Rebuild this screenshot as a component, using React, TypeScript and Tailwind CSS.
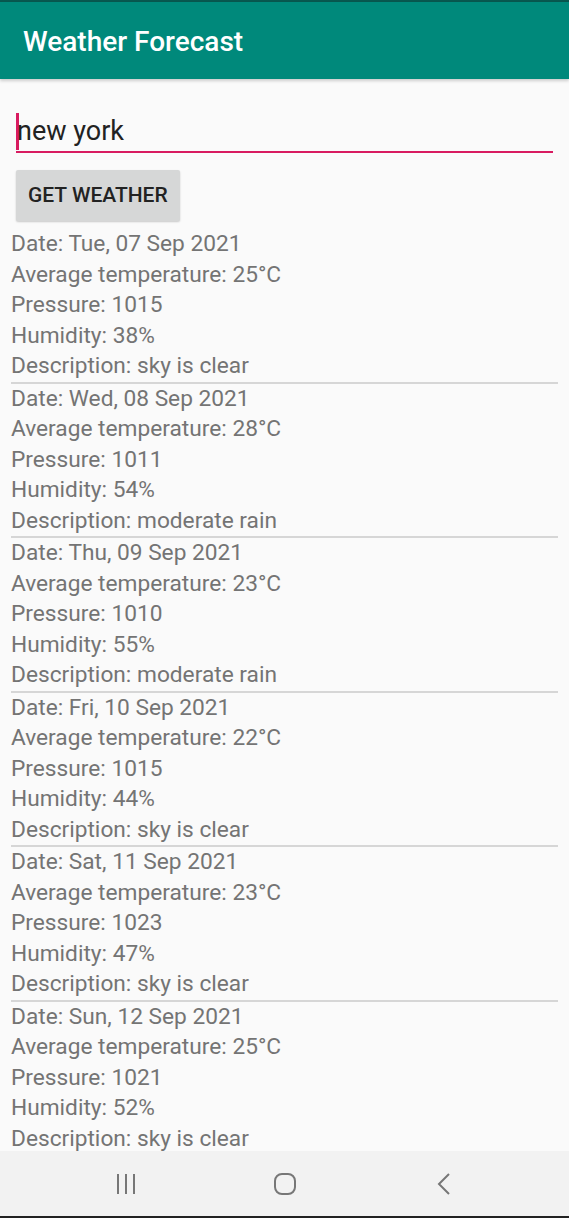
// forecast rows, as shown on screen
const DAYS = [
  { date: "Tue, 07 Sep 2021", temp: 25, pressure: 1015, humidity: 38, desc: "sky is clear" },
  { date: "Wed, 08 Sep 2021", temp: 28, pressure: 1011, humidity: 54, desc: "moderate rain" },
  { date: "Thu, 09 Sep 2021", temp: 23, pressure: 1010, humidity: 55, desc: "moderate rain" },
  { date: "Fri, 10 Sep 2021", temp: 22, pressure: 1015, humidity: 44, desc: "sky is clear" },
  { date: "Sat, 11 Sep 2021", temp: 23, pressure: 1023, humidity: 47, desc: "sky is clear" },
  { date: "Sun, 12 Sep 2021", temp: 25, pressure: 1021, humidity: 52, desc: "sky is clear" },
];

const NavBar = () => (
  <div className="h-[67px] shrink-0 bg-[#f2f2f2] border-b-2 border-[#222]">
    <div className="flex h-full items-center pl-[46px] text-[#777]">
      <div className="w-[159px] flex justify-center">
        <svg width="20" height="22" viewBox="0 0 20 22">
          <path d="M2 1v20M10 1v20M18 1v20" stroke="currentColor" strokeWidth="2" fill="none" />
        </svg>
      </div>
      <div className="w-[159px] flex justify-center">
        <svg width="24" height="24" viewBox="0 0 24 24">
          <rect x="2" y="2" width="20" height="20" rx="7" stroke="currentColor" strokeWidth="2" fill="none" />
        </svg>
      </div>
      <div className="w-[159px] flex justify-center">
        <svg width="16" height="24" viewBox="0 0 16 24">
          <path d="M13 2 3 12l10 10" stroke="currentColor" strokeWidth="2" fill="none" />
        </svg>
      </div>
    </div>
  </div>
);

export default function App() {
  return (
    <div className="flex flex-col h-[1218px] overflow-hidden bg-[#fafafa] font-['Roboto',sans-serif]">
      <div className="h-[2px] shrink-0 bg-[#08574f]" />
      <header className="h-[77px] shrink-0 flex items-center px-[23px] pt-[2px] bg-[#00897b] shadow-[0_2px_3px_rgba(0,0,0,0.18)] z-10">
        <h1 className="text-white text-[28px] font-medium">Weather Forecast</h1>
      </header>

      <main className="flex-1 overflow-hidden">
        <div className="px-4 pt-[32px]">
          <div className="flex items-center h-[42px] border-b-2 border-[#d81b60]">
            <span className="w-[3px] h-[37px] bg-[#d81b60] -mr-[2px]" />
            <span className="text-[27px] text-[#222]">new york</span>
          </div>
          <button className="mt-[17px] h-[51px] px-[12px] bg-[#d6d7d7] rounded-[2px] shadow-[0_1px_2px_rgba(0,0,0,0.2)] text-[21px] font-medium text-[#222]">
            GET WEATHER
          </button>
        </div>

        <div className="px-[11px] mt-[8px]">
          {DAYS.map((d) => (
            <div key={d.date} className="border-b-2 border-[#d6d6d6] text-[22.7px] leading-[30.5px] text-[#747474]">
              <p>Date: {d.date}</p>
              <p>Average temperature: {d.temp}°C</p>
              <p>Pressure: {d.pressure}</p>
              <p>Humidity: {d.humidity}%</p>
              <p>Description: {d.desc}</p>
            </div>
          ))}
        </div>
      </main>

      <NavBar />
    </div>
  );
}
